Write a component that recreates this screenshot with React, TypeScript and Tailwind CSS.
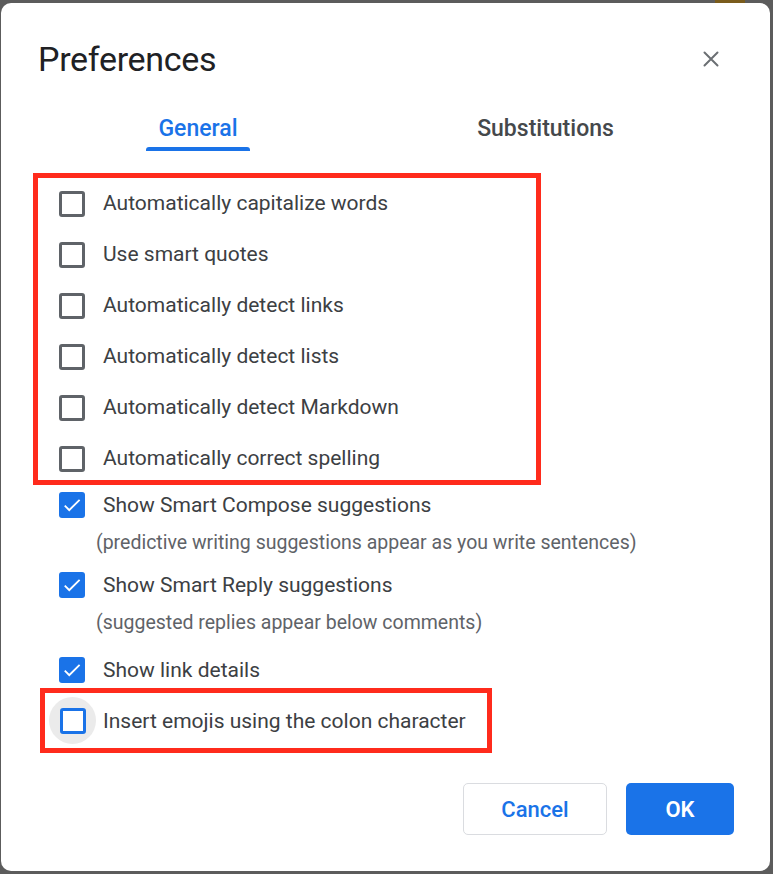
import React from "react";

const boxed = [
  "Automatically capitalize words",
  "Use smart quotes",
  "Automatically detect links",
  "Automatically detect lists",
  "Automatically detect Markdown",
  "Automatically correct spelling",
];

function EmptyBox({ focused = false }: { focused?: boolean }) {
  return (
    <div
      className={
        focused
          ? "w-[26px] h-[26px] shrink-0 rounded-[3px] border-[3px] border-[#1a73e8] bg-white"
          : "w-[26px] h-[26px] shrink-0 rounded-[3px] border-[3px] border-[#5f6368] bg-white"
      }
    />
  );
}

function CheckedBox() {
  return (
    <div className="w-[26px] h-[26px] shrink-0 rounded-[3px] bg-[#1a73e8] flex items-center justify-center">
      <svg width="22" height="22" viewBox="0 0 24 24" fill="#fff">
        <path d="M9 16.2 4.8 12l-1.4 1.4L9 19 21 7l-1.4-1.4L9 16.2z" />
      </svg>
    </div>
  );
}

export default function App() {
  return (
    <div
      className="w-[773px] h-[874px] bg-[#5c5c5c] overflow-hidden"
      style={{ fontFamily: "Roboto, 'Noto Sans', sans-serif" }}
    >
      <div className="h-[3px] flex">
        <div className="w-[715px]" />
        <div className="w-[30px] bg-[#7a5c1c]" />
      </div>
      <div className="ml-[1px] w-[769px] h-[868px] bg-white rounded-[10px] flex flex-col">
        {/* header */}
        <div className="mt-[36px] h-[40px] flex items-center justify-between pl-[37px] pr-[51px]">
          <h1 className="text-[34px] leading-[40px] text-[#202124] tracking-[-0.3px]">
            Preferences
          </h1>
          <button className="w-[16px] h-[16px] -mt-[1px]">
            <svg width="16" height="16" viewBox="0 0 16 16" stroke="#6b6f73" strokeWidth="2" strokeLinecap="round">
              <path d="M1.5 1.5 14.5 14.5M14.5 1.5 1.5 14.5" />
            </svg>
          </button>
        </div>

        {/* tabs */}
        <div className="mt-[33px] ml-[37px] flex h-[39px]">
          <div className="w-[320px] relative flex justify-center pt-[4px]">
            <span className="text-[23px] leading-[26px] font-medium text-[#1a73e8]">General</span>
            <div className="absolute bottom-0 left-[108px] w-[104px] h-[4px] rounded-t-[3px] bg-[#1a73e8]" />
          </div>
          <div className="w-[375px] flex justify-center pt-[4px]">
            <span className="text-[23px] leading-[26px] font-medium text-[#45484b]">Substitutions</span>
          </div>
        </div>

        {/* highlighted group */}
        <div className="mt-[22px] ml-[32px] w-[508px] h-[312px] border-[5px] border-[#ff2b1c]">
          {boxed.map((label) => (
            <div key={label} className="h-[51px] flex items-center pl-[21px] gap-[18px]">
              <EmptyBox />
              <span className="text-[21px] leading-[24px] text-[#3c4043] -mt-[2px]">{label}</span>
            </div>
          ))}
        </div>

        <div className="pl-[58px]">
          <div className="h-[40px] flex items-center gap-[18px]">
            <CheckedBox />
            <span className="text-[21px] leading-[24px] text-[#3c4043]">Show Smart Compose suggestions</span>
          </div>
          <div className="h-[36px] flex items-center ml-[37px]">
            <span className="text-[19.5px] leading-[22px] text-[#5f6368]">
              (predictive writing suggestions appear as you write sentences)
            </span>
          </div>
          <div className="h-[48px] flex items-center gap-[18px]">
            <CheckedBox />
            <span className="text-[21px] leading-[24px] text-[#3c4043]">Show Smart Reply suggestions</span>
          </div>
          <div className="h-[28px] flex items-center ml-[37px]">
            <span className="text-[19.5px] leading-[22px] text-[#5f6368]">
              (suggested replies appear below comments)
            </span>
          </div>
          <div className="mt-[15px] h-[36px] flex items-center gap-[18px]">
            <CheckedBox />
            <span className="text-[21px] leading-[24px] text-[#3c4043]">Show link details</span>
          </div>
        </div>

        <div className="ml-[39px] w-[452px] h-[65px] border-[5px] border-[#ff2b1c] flex items-center pl-[4px]">
          <div className="w-[47px] h-[47px] rounded-full bg-[#ebebeb] flex items-center justify-center">
            <EmptyBox focused />
          </div>
          <span className="ml-[7px] text-[21px] leading-[24px] text-[#3c4043]">
            Insert emojis using the colon character
          </span>
        </div>

        {/* footer */}
        <div className="mt-[30px] flex justify-end gap-[19px] pr-[36px]">
          <button className="w-[144px] h-[52px] rounded-[5px] border border-[#dadce0] bg-white text-[22px] font-medium text-[#1a73e8]">
            Cancel
          </button>
          <button className="w-[108px] h-[52px] rounded-[5px] bg-[#1a73e8] text-[22px] font-semibold text-white">
            OK
          </button>
        </div>
      </div>
    </div>
  );
}
